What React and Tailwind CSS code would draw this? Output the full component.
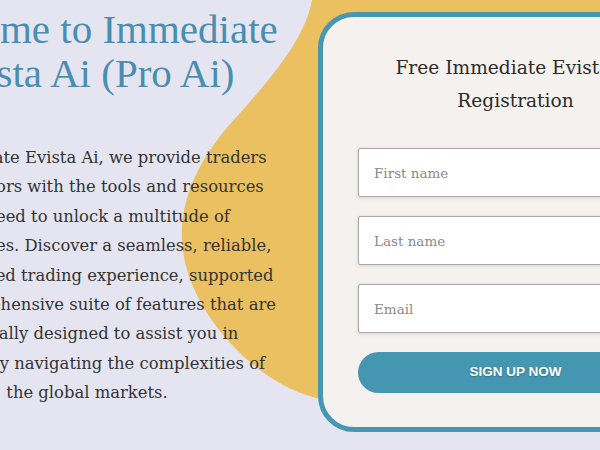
import React from 'react';

const serif = { fontFamily: '"DejaVu Serif", Georgia, serif' };
const headSerif = { fontFamily: '"Liberation Serif", Georgia, serif' };

function Blob() {
    return (
        <svg className="absolute inset-0" width="600" height="450" viewBox="0 0 600 450">
            <path
                d="M312 0 C305 40 268 82 232 122 C198 160 180 200 182 240 C184 290 220 340 260 370 C280 385 300 395 325 400 L600 400 L600 0 Z"
                fill="#ebc061"
            />
        </svg>
    );
}

function SignupForm() {
    return (
        <div className="shrink-0 w-[395px] h-[420px] mt-[12px] ml-[37px] rounded-[36px] border-[5px] border-[#4697b1] bg-[#f5f1ee] px-[35px] pt-[34px]">
            <h2 className="text-[18.6px] leading-[33px] text-[#2b2b2b] text-center" style={serif}>
                Free Immediate Evista Ai Registration
            </h2>
            <form className="mt-[31px] flex flex-col gap-[19px]" onSubmit={(e) => e.preventDefault()}>
                {['First name', 'Last name', 'Email'].map((label) => (
                    <input
                        key={label}
                        placeholder={label}
                        className="h-[49px] w-full bg-white border border-[#a9a9ad] rounded-[2px] px-[15px] text-[13.5px] placeholder:text-[#8a8a8a] shadow-[0_1px_4px_rgba(0,0,0,0.12)] outline-none"
                        style={serif}
                    />
                ))}
                <button
                    type="submit"
                    className="h-[41px] w-full rounded-full bg-[#4596b0] text-white text-[13.5px] font-bold uppercase [text-shadow:0_1px_2px_rgba(0,0,0,0.25)]"
                    style={{ fontFamily: '"Liberation Sans", Arial, sans-serif' }}
                >
                    Sign up now
                </button>
            </form>
        </div>
    );
}

export default function App() {
    return (
        <div className="relative w-[600px] h-[450px] overflow-hidden bg-[#e4e5f1]">
            <Blob />
            <div className="relative flex ml-[-107px]">
                <div className="shrink-0 w-[388px] text-center pt-[7px]">
                    <h1 className="mx-[-12px] text-[41px] leading-[44px] text-[#4a8db0]" style={headSerif}>
                        Welcome to Immediate Evista Ai (Pro Ai)
                    </h1>
                    <p className="mt-[48px] text-[16.4px] leading-[29.4px] text-[#333333]" style={serif}>
                        At Immediate Evista Ai, we provide traders and investors with the tools and resources they need to unlock a multitude of opportunities. Discover a seamless, reliable, and advanced trading experience, supported by a comprehensive suite of features that are specifically designed to assist you in successfully navigating the complexities of the global markets.
                    </p>
                </div>
                <SignupForm />
            </div>
        </div>
    );
}
